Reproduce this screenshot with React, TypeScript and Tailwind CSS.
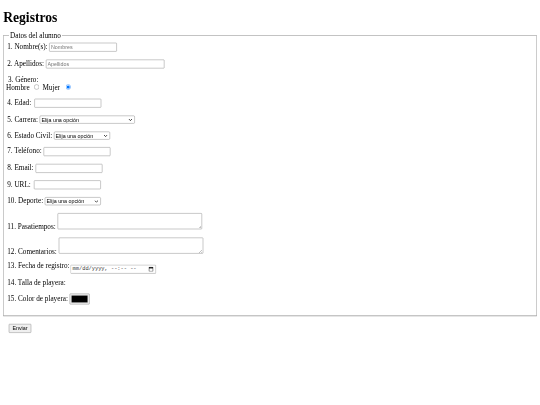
import React from "react";

const field =
  "border border-[#767676] rounded-[2px] bg-white px-[3px] py-[2px] h-[22px] text-[13.333px] leading-[15px] font-['Liberation_Sans',Arial,sans-serif] text-black placeholder:text-[#757575] align-baseline";

const selectCls =
  "appearance-none border border-[#767676] rounded-[3px] bg-white pl-[3px] pr-[20px] h-[20px] text-[13.333px] leading-[15px] font-['Liberation_Sans',Arial,sans-serif] text-black align-baseline";

function Select({ w }: { w: string }) {
  return (
    <span className={`relative inline-block align-baseline ${w}`}>
      <select className={`${selectCls} w-full`} defaultValue="">
        <option value="">Elija una opción</option>
      </select>
      <svg
        className="pointer-events-none absolute right-[6px] top-[7px]"
        width="10"
        height="7"
        viewBox="0 0 10 7"
      >
        <path d="M1 1.5 L5 5.5 L9 1.5" fill="none" stroke="#000" strokeWidth="1.8" />
      </svg>
    </span>
  );
}

function Row({ children, className = "mb-[19.4px]" }: { children: React.ReactNode; className?: string }) {
  return <div className={className}>{children}</div>;
}

const areaCls =
  "border border-[#767676] rounded-[2px] bg-white p-[2px] w-[361px] h-[40px] align-baseline font-['Liberation_Mono',monospace] text-[13.333px] resize";

export default function App() {
  return (
    <div className="w-[540px] h-[405px] overflow-hidden bg-white">
      <div className="flow-root w-[1350px] h-[1012px] origin-top-left scale-[0.4] px-2 font-['Liberation_Serif','Times_New_Roman',serif] text-[18px] leading-[18.4px] text-black">
        <h1 className="text-[34px] leading-[37px] font-bold mt-[25px] mb-[17.88px]">Registros</h1>
        <form>
          <fieldset className="border-2 [border-style:groove] border-[#c0c0c0] pl-[8px] pr-[12px] pt-[9px] pb-[10px]">
            <legend className="px-[2px] ml-[5px]">Datos del alumno</legend>
            <Row>
              <label>1. Nombre(s):</label>{" "}
              <input type="text" placeholder="Nombres" className={`${field} w-[169px]`} />
            </Row>
            <Row>
              <label>2. Apellidos:</label>{" "}
              <input type="text" placeholder="Apellidos" className={`${field} w-[296px]`} />
            </Row>
            <Row>
              <label className="ml-[2px]">3. Género:</label>
              <br />
              <span className="-ml-[3px]">Hombre</span>{" "}
              <input type="radio" name="genero" className="ml-[7px] mr-[3px] mt-[3px] align-baseline" />
              {" "}Mujer{" "}
              <input type="radio" name="genero" defaultChecked className="ml-[10px] mr-[3px] mt-[3px] align-baseline accent-[#0075ff]" />
            </Row>
            <Row>
              <label>4. Edad:</label>{" "}
              <input type="text" className={`${field} w-[167px] ml-[3px]`} />
            </Row>
            <Row>
              <label>5. Carrera:</label> <Select w="w-[238px]" />
            </Row>
            <Row>
              <label>6. Estado Civil:</label> <Select w="w-[140px]" />
            </Row>
            <Row>
              <label>7. Teléfono:</label>{" "}
              <input type="text" className={`${field} w-[167px]`} />
            </Row>
            <Row>
              <label>8. Email:</label>{" "}
              <input type="text" className={`${field} w-[167px]`} />
            </Row>
            <Row>
              <label>9. URL:</label>{" "}
              <input type="text" className={`${field} w-[167px] ml-[3px]`} />
            </Row>
            <Row>
              <label>10. Deporte:</label> <Select w="w-[140px]" />
            </Row>
            <Row className="mb-[18.4px]">
              <label>11. Pasatiempos:</label> <textarea className={areaCls} />
            </Row>
            <Row className="mb-[18.4px]">
              <label>12. Comentarios:</label> <textarea className={areaCls} />
            </Row>
            <Row className="mb-[18.4px]">
              <label>13. Fecha de registro:</label>{" "}
              <span className="-ml-[2px] inline-flex items-center align-baseline border border-[#767676] rounded-[2px] bg-white pl-[4px] pr-[5px] h-[22px] w-[214px] relative top-[5px]">
                <span className="font-['Liberation_Mono',monospace] text-[13.333px] leading-[15px] text-[#3b3b3b] grow">
                  mm/dd/yyyy, --:-- --
                </span>
                <svg width="13" height="13" viewBox="0 0 13 13">
                  <rect x="1.5" y="2.5" width="10" height="9.5" fill="none" stroke="#000" strokeWidth="1.3" />
                  <rect x="1.5" y="2.5" width="10" height="2.5" fill="#000" />
                  <rect x="3.5" y="0.5" width="1.3" height="2.5" fill="#000" />
                  <rect x="8.2" y="0.5" width="1.3" height="2.5" fill="#000" />
                </svg>
              </span>
            </Row>
            <Row className="mb-[18.4px]">
              <label>14. Talla de playera:</label>
            </Row>
            <Row className="mb-[18.4px]">
              <label>15. Color de playera:</label>{" "}
              <span className="inline-flex align-middle w-[50px] h-[27px] border border-[#767676] rounded-[2px] bg-[#efefef] px-[4px] py-[4px]">
                <span className="block w-full h-full bg-black border border-[#777]" />
              </span>
            </Row>
          </fieldset>
          <div className="mt-[18.4px] pl-[14px]">
            <button
              type="submit"
              className="border border-[#767676] rounded-[2px] bg-[#efefef] px-[8px] h-[22px] text-[13.333px] leading-[15px] font-['Liberation_Sans',Arial,sans-serif]"
            >
              Enviar
            </button>
          </div>
        </form>
      </div>
    </div>
  );
}
